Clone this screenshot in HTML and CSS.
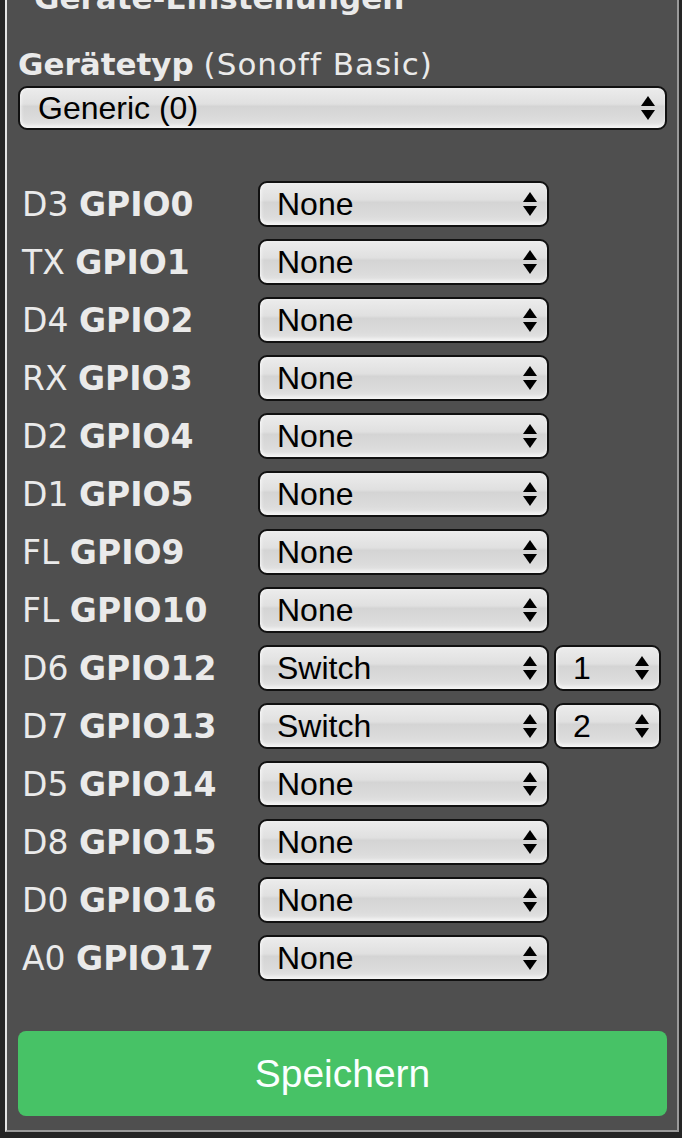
FILE: index.html
```html
<!DOCTYPE html>
<html lang="de">
<head>
  <meta charset="UTF-8">
  <meta name="viewport" content="width=device-width, initial-scale=1.0">
  <title>Geräte-Einstellungen</title>
  <link rel="stylesheet" href="styles.css">
</head>
<body>

  <fieldset id="settings">
    <legend>Geräte-Einstellungen</legend>

    <p id="deviceType"><b>Gerätetyp</b> <span>(Sonoff Basic)</span></p>
    <div class="sel full">
      <select><option>Generic (0)</option></select>
      <svg class="arrows" viewBox="0 0 14 24"><polygon points="7,0 14,10 0,10"/><polygon points="0,14 14,14 7,24"/></svg>
    </div>

    <div id="pins"></div>

    <button id="saveBtn">Speichern</button>
  </fieldset>

  <script>
    const pins = [
      ["D3", "GPIO0", "None"],
      ["TX", "GPIO1", "None"],
      ["D4", "GPIO2", "None"],
      ["RX", "GPIO3", "None"],
      ["D2", "GPIO4", "None"],
      ["D1", "GPIO5", "None"],
      ["FL", "GPIO9", "None"],
      ["FL", "GPIO10", "None"],
      ["D6", "GPIO12", "Switch", "1"],
      ["D7", "GPIO13", "Switch", "2"],
      ["D5", "GPIO14", "None"],
      ["D8", "GPIO15", "None"],
      ["D0", "GPIO16", "None"],
      ["A0", "GPIO17", "None"]
    ];

    const arrows = '<svg class="arrows" viewBox="0 0 14 24"><polygon points="7,0 14,10 0,10"/><polygon points="0,14 14,14 7,24"/></svg>';

    function selectBox(value, cls) {
      return `<div class="sel ${cls}"><select><option>${value}</option></select>${arrows}</div>`;
    }

    const pinList = document.getElementById("pins");
    pins.forEach(function(pin) {
      const label = document.createElement("div");
      label.className = "pinLabel";
      label.innerHTML = `${pin[0]} <b>${pin[1]}</b>`;

      const cell = document.createElement("div");
      cell.className = "pinCell";
      cell.innerHTML = selectBox(pin[2], "main");
      if (pin[3]) {
        cell.innerHTML += selectBox(pin[3], "index");
      }

      pinList.appendChild(label);
      pinList.appendChild(cell);
    });
  </script>

</body>
</html>
```

FILE: styles.css
```css
body {
  margin: 0;
  background: #252525;
  color: #eaeaea;
  font-family: verdana, "DejaVu Sans", sans-serif;
}

#settings {
  margin: -20px 3px 0 5px;
  padding: 0 10px 14px 11px;
  border: 2px solid;
  border-color: #d8d8d8 #9a9a9a #9a9a9a #e4e4e4;
  background: #4f4f4f;
}

#settings legend {
  font-size: 31px;
  font-weight: bold;
  margin-left: 10px;
  padding: 0 6px;
}

#deviceType {
  margin: 30px 0 4px 0;
  font-size: 31px;
}

#deviceType span {
  letter-spacing: 1px;
}

.sel {
  position: relative;
  height: 46px;
}

.sel select {
  -webkit-appearance: none;
  appearance: none;
  width: 100%;
  height: 100%;
  margin: 0;
  padding: 0 40px 0 17px;
  border: 2px solid #111;
  border-radius: 9px;
  color: #000;
  font-family: "Liberation Sans", Arial, sans-serif;
  font-size: 32px;
  background: linear-gradient(to bottom, #ececec 0%, #e0e0e0 40%, #d4d4d4 46%, #dcdcdc 80%, #e6e6e6 100%);
  box-shadow: inset 0 -3px 3px rgba(255, 255, 255, 0.5), inset 2px 0 3px rgba(255, 255, 255, 0.4);
}

.sel.full {
  height: 44px;
}

.sel.full select {
  padding-left: 18px;
}

.arrows {
  position: absolute;
  top: 50%;
  right: 12px;
  width: 14px;
  height: 24px;
  margin-top: -12px;
  fill: #000;
  pointer-events: none;
}

#pins {
  display: grid;
  grid-template-columns: 240px auto;
  row-gap: 12px;
  align-items: center;
  margin-top: 51px;
}

.pinLabel {
  padding-left: 4px;
  font-size: 33px;
}

.pinCell {
  display: flex;
  gap: 5px;
}

.sel.main {
  width: 291px;
}

.sel.index {
  width: 107px;
}

#saveBtn {
  display: block;
  width: 100%;
  height: 85px;
  margin-top: 50px;
  border: 0;
  border-radius: 8px;
  background: #47c266;
  color: #faffff;
  font-family: "Liberation Sans", Arial, sans-serif;
  font-size: 39px;
  cursor: pointer;
}
```
